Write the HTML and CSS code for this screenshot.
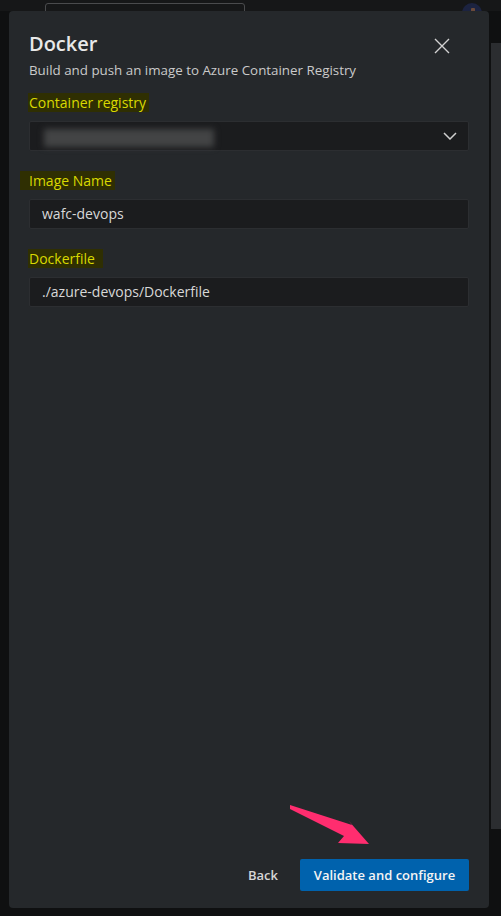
FILE: index.html
```html
<!DOCTYPE html>
<html lang="en">
<head>
<meta charset="utf-8">
<title>Docker</title>
<link rel="stylesheet" href="styles.css">
</head>
<body>
<div class="topbar">
  <div class="search"></div>
  <div class="avatar"><span class="avatar-dot"></span></div>
</div>
<div class="stage">
  <section class="panel">
    <header class="panel-header">
      <div class="titles">
        <h1 class="title">Docker</h1>
        <p class="subtitle">Build and push an image to Azure Container Registry</p>
      </div>
      <button class="close" aria-label="Close">
        <svg width="16" height="16" viewBox="0 0 16 16"><path d="M1 1 L15 15 M15 1 L1 15" stroke="#d2d2d2" stroke-width="1.4" fill="none"/></svg>
      </button>
    </header>
    <div class="fields">
      <div class="field">
        <div class="label"><span class="mark mark-a">Container registry</span></div>
        <div class="control select">
          <div class="redacted"></div>
          <svg class="chevron" width="14" height="8" viewBox="0 0 14 8"><path d="M1 1 L7 7 L13 1" stroke="#cfcfcf" stroke-width="1.5" fill="none"/></svg>
        </div>
      </div>
      <div class="field">
        <div class="label"><span class="mark mark-b">Image Name</span></div>
        <div class="control">wafc-devops</div>
      </div>
      <div class="field">
        <div class="label"><span class="mark mark-c">Dockerfile</span></div>
        <div class="control">./azure-devops/Dockerfile</div>
      </div>
    </div>
    <div class="spacer"></div>
    <footer class="footer">
      <button class="btn btn-back">Back</button>
      <button class="btn btn-primary">Validate and configure</button>
    </footer>
    <svg class="arrow" width="90" height="50" viewBox="285 800 90 50">
      <polygon points="290,805 352,825 348,820 369,844 338,843 344,836 290,809" fill="#ff2d6f"/>
    </svg>
  </section>
  <div class="side">
    <div class="side-light"></div>
  </div>
</div>
</body>
</html>
```

FILE: styles.css
```css
* { box-sizing: border-box; }
html, body { margin: 0; padding: 0; }
body {
  background: #0f1011;
  width: 501px;
  height: 916px;
  overflow: hidden;
  font-family: "Open Sans", "Noto Sans", sans-serif;
}
.topbar {
  height: 11px;
  background: #161718;
  display: flex;
  overflow: hidden;
  position: relative;
}
.search {
  margin-left: 45px;
  margin-top: 3px;
  width: 200px;
  height: 20px;
  border: 1px solid #4a4b4d;
  border-radius: 3px;
  background: #161718;
}
.avatar {
  margin-left: 217px;
  margin-top: 3px;
  width: 20px;
  height: 20px;
  border-radius: 50%;
  background: #1c2340;
  position: relative;
}
.avatar-dot {
  position: absolute;
  left: 9px;
  top: 5px;
  width: 4px;
  height: 5px;
  background: #6b4a3a;
  border-radius: 1px;
}
.stage {
  display: flex;
  padding-left: 9px;
  height: 905px;
}
.panel {
  position: relative;
  width: 480px;
  height: 897px;
  background: #25282b;
  border-radius: 4px;
  display: flex;
  flex-direction: column;
  color: #e4e4e4;
}
.panel-header {
  display: flex;
  justify-content: space-between;
  padding: 19px 0 0 20px;
}
.title {
  margin: 0;
  font-size: 20px;
  line-height: 28px;
  font-weight: 600;
  color: #e8e8e8;
}
.subtitle {
  margin: 2px 0 0;
  font-size: 13.35px;
  line-height: 20px;
  color: #cacaca;
}
.close {
  background: none;
  border: 0;
  padding: 0;
  width: 16px;
  height: 16px;
  margin: 8px 39px 0 0;
  display: flex;
}
.fields {
  padding: 13px 20px 0;
  display: flex;
  flex-direction: column;
  gap: 20px;
}
.label {
  font-size: 14px;
  line-height: 20px;
  margin-bottom: 8px;
}
.mark {
  background: #2f2f02;
  color: #d9d900;
  padding: 0 3px 0 1px;
  margin-left: -1px;
}
.mark-b { padding-left: 9px; margin-left: -9px; }
.mark-c { padding-right: 8px; }
.control {
  height: 30px;
  background: #1b1c1e;
  border: 1px solid #2c2e31;
  border-radius: 2px;
  font-size: 14px;
  line-height: 28px;
  padding: 0 12px;
  color: #d8d8d8;
  display: flex;
  align-items: center;
}
.select { justify-content: space-between; padding-right: 11px; }
.redacted {
  width: 170px;
  height: 18px;
  margin-left: 2px;
  margin-top: 4px;
  background: #434445;
  filter: blur(3px);
}
.chevron { display: block; }
.spacer { flex: 1; }
.footer {
  display: flex;
  justify-content: flex-end;
  gap: 8px;
  padding: 0 20px 17px;
}
.btn {
  height: 32px;
  border: 0;
  border-radius: 2px;
  font-family: "Open Sans", "Noto Sans", sans-serif;
  font-size: 13px;
  font-weight: 600;
  padding: 0 13px;
  cursor: pointer;
}
.btn-back {
  background: transparent;
  color: #d6d6d6;
  padding: 0 14px;
}
.btn-primary {
  background: #0062ad;
  color: #f4f4f4;
  width: 169px;
}
.arrow {
  position: absolute;
  left: 276px;
  top: 789px;
}
.side {
  margin-left: 2px;
  width: 10px;
  padding-top: 32px;
  display: flex;
  flex-direction: column;
  background: transparent;
}
.side-light {
  height: 786px;
  background: #2b2d30;
}
```
